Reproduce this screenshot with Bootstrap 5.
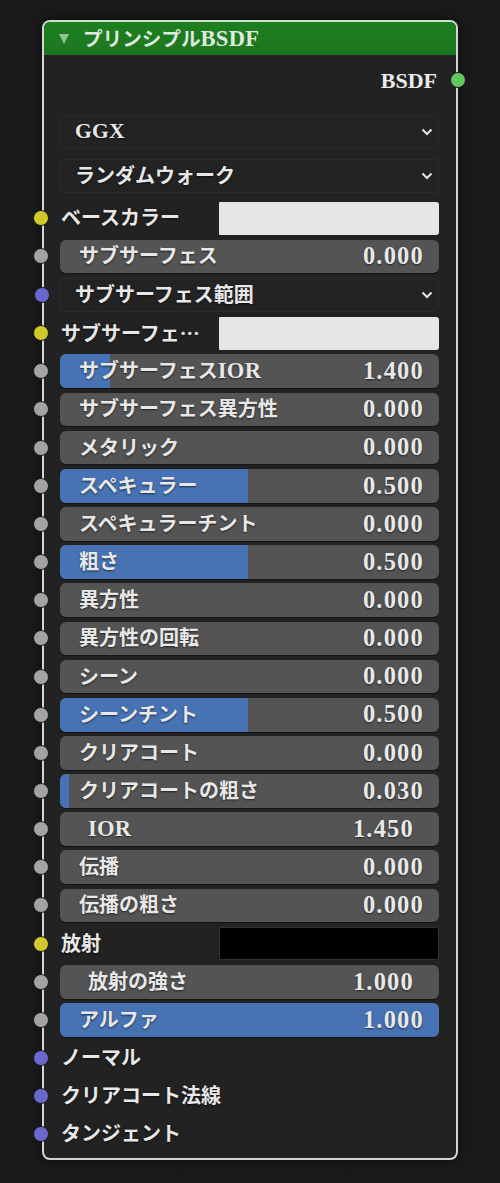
<!DOCTYPE html>
<html lang="ja">
<head>
<meta charset="utf-8">
<link href="https://cdn.jsdelivr.net/npm/bootstrap@5.3.0/dist/css/bootstrap.min.css" rel="stylesheet">
<style>
html,body{height:100%}
body{margin:0;background-color:#1a1a1a;background-image:linear-gradient(#161616 1px,transparent 1px),linear-gradient(90deg,#161616 1px,transparent 1px);background-size:169px 169px;background-position:9px 102px;font-family:"Liberation Serif","Noto Sans CJK JP",serif;font-weight:700;color:#e8e8e8;overflow:hidden}
.stage{padding:20px 42px 0;width:500px}
.bnode{position:relative;width:416px;height:1140px;background:#222;border:2px solid #d4d4d4;border-top-color:#cfe0cf;border-radius:8px;box-shadow:0 0 12px rgba(0,0,0,.55)}
.bhead{height:33px;background:linear-gradient(#1c7f1e 0,#1e7a20 60%,#1c741e 100%);border-radius:6px 6px 0 0;padding-left:15px;font-size:19.6px;line-height:33px;color:#dfe9df;gap:14px}
.tri{width:0;height:0;border-left:5.5px solid transparent;border-right:5.5px solid transparent;border-top:10px solid #8fc08f}
.ltn{font-size:22.5px;letter-spacing:.3px}
.ggx{font-size:21.5px;letter-spacing:.3px}
.bout{height:50px;padding-right:19px;font-size:22px;color:#ececec}
.rows{padding:10px 17px 0 16px;gap:4.5px}
.prow{position:relative;height:33.67px;font-size:20px;line-height:1;text-shadow:0 1px 2px rgba(0,0,0,.6);flex:none}
.drop{height:34px;border:1px solid #2c2c2c;background:#232323;border-radius:4px;padding:0 5px 0 14px}
.drop1{margin-bottom:5.7px}
.drop2{margin-bottom:3.8px}
.num{background:#545454;border-radius:6px;padding:0 15px 0 19px;box-shadow:0 1px 1px rgba(0,0,0,.4)}
.num.ind{padding:0 25px 0 28px}
.fillbar{position:absolute;left:0;top:0;bottom:0;background:#4772b3;border-radius:6px 0 0 6px}
.fillfull{border-radius:6px}
.num>span{position:relative}
.swatch{width:220px;height:33px;border-radius:1px 3px 3px 1px}
.sw-w{background:#e6e6e6}
.sw-k{background:#000;border:1px solid #333}
.lbl{padding-left:1px}
.ell{font-family:"Noto Sans CJK JP",sans-serif}
.sock{position:absolute;left:-27px;top:50%;width:16px;height:16px;margin-top:-8px;border-radius:50%;border:1px solid #1c1c1c}
.s-y{background:#d0c92a}
.s-g{background:#a3a3a3}
.s-b{background:#6868cf}
.s-o{background:#63c763;position:absolute;right:-10px;top:50%;width:16px;height:16px;margin-top:-8px;border-radius:50%;border:1px solid #1c1c1c}
.chev{width:12px;height:8px;flex:none}
.val{font-size:24.5px;letter-spacing:1.2px}
</style>
</head>
<body>
<div class="stage">
<div class="bnode">
  <div class="bhead d-flex align-items-center"><span class="tri"></span><span>プリンシプル<span class="ltn">BSDF</span></span></div>
  <div class="bout d-flex align-items-center justify-content-end position-relative">BSDF<i class="s-o"></i></div>
  <div class="rows d-flex flex-column">
    <div class="prow drop drop1 d-flex align-items-center justify-content-between"><span class="ggx">GGX</span><svg class="chev" viewBox="0 0 12 8"><path d="M1.5 1.5 6 6l4.5-4.5" fill="none" stroke="#e6e6e6" stroke-width="2"/></svg></div>
    <div class="prow drop drop2 d-flex align-items-center justify-content-between"><span>ランダムウォーク</span><svg class="chev" viewBox="0 0 12 8"><path d="M1.5 1.5 6 6l4.5-4.5" fill="none" stroke="#e6e6e6" stroke-width="2"/></svg></div>
    <div class="prow d-flex align-items-center justify-content-between"><i class="sock s-y"></i><span class="lbl">ベースカラー</span><div class="swatch sw-w"></div></div>
    <div class="prow num d-flex align-items-center justify-content-between"><i class="sock s-g"></i><span>サブサーフェス</span><span class="val">0.000</span></div>
    <div class="prow drop d-flex align-items-center justify-content-between"><i class="sock s-b"></i><span>サブサーフェス範囲</span><svg class="chev" viewBox="0 0 12 8"><path d="M1.5 1.5 6 6l4.5-4.5" fill="none" stroke="#e6e6e6" stroke-width="2"/></svg></div>
    <div class="prow d-flex align-items-center justify-content-between"><i class="sock s-y"></i><span class="lbl">サブサーフェ<span class="ell">…</span></span><div class="swatch sw-w"></div></div>
    <div class="prow num d-flex align-items-center justify-content-between"><div class="fillbar" style="width:13.2%"></div><i class="sock s-g"></i><span>サブサーフェス<span class="ltn">IOR</span></span><span class="val">1.400</span></div>
    <div class="prow num d-flex align-items-center justify-content-between"><i class="sock s-g"></i><span>サブサーフェス異方性</span><span class="val">0.000</span></div>
    <div class="prow num d-flex align-items-center justify-content-between"><i class="sock s-g"></i><span>メタリック</span><span class="val">0.000</span></div>
    <div class="prow num d-flex align-items-center justify-content-between"><div class="fillbar" style="width:49.6%"></div><i class="sock s-g"></i><span>スペキュラー</span><span class="val">0.500</span></div>
    <div class="prow num d-flex align-items-center justify-content-between"><i class="sock s-g"></i><span>スペキュラーチント</span><span class="val">0.000</span></div>
    <div class="prow num d-flex align-items-center justify-content-between"><div class="fillbar" style="width:49.6%"></div><i class="sock s-g"></i><span>粗さ</span><span class="val">0.500</span></div>
    <div class="prow num d-flex align-items-center justify-content-between"><i class="sock s-g"></i><span>異方性</span><span class="val">0.000</span></div>
    <div class="prow num d-flex align-items-center justify-content-between"><i class="sock s-g"></i><span>異方性の回転</span><span class="val">0.000</span></div>
    <div class="prow num d-flex align-items-center justify-content-between"><i class="sock s-g"></i><span>シーン</span><span class="val">0.000</span></div>
    <div class="prow num d-flex align-items-center justify-content-between"><div class="fillbar" style="width:49.6%"></div><i class="sock s-g"></i><span>シーンチント</span><span class="val">0.500</span></div>
    <div class="prow num d-flex align-items-center justify-content-between"><i class="sock s-g"></i><span>クリアコート</span><span class="val">0.000</span></div>
    <div class="prow num d-flex align-items-center justify-content-between"><div class="fillbar" style="width:2.4%"></div><i class="sock s-g"></i><span>クリアコートの粗さ</span><span class="val">0.030</span></div>
    <div class="prow num ind d-flex align-items-center justify-content-between"><i class="sock s-g"></i><span class="ltn">IOR</span><span class="val">1.450</span></div>
    <div class="prow num d-flex align-items-center justify-content-between"><i class="sock s-g"></i><span>伝播</span><span class="val">0.000</span></div>
    <div class="prow num d-flex align-items-center justify-content-between"><i class="sock s-g"></i><span>伝播の粗さ</span><span class="val">0.000</span></div>
    <div class="prow d-flex align-items-center justify-content-between"><i class="sock s-y"></i><span class="lbl">放射</span><div class="swatch sw-k"></div></div>
    <div class="prow num ind d-flex align-items-center justify-content-between"><i class="sock s-g"></i><span>放射の強さ</span><span class="val">1.000</span></div>
    <div class="prow num d-flex align-items-center justify-content-between"><div class="fillbar fillfull" style="width:100%"></div><i class="sock s-g"></i><span>アルファ</span><span class="val">1.000</span></div>
    <div class="prow d-flex align-items-center"><i class="sock s-b"></i><span class="lbl">ノーマル</span></div>
    <div class="prow d-flex align-items-center"><i class="sock s-b"></i><span class="lbl">クリアコート法線</span></div>
    <div class="prow d-flex align-items-center"><i class="sock s-b"></i><span class="lbl">タンジェント</span></div>
  </div>
</div>
</div>
<script src="https://cdn.jsdelivr.net/npm/bootstrap@5.3.0/dist/js/bootstrap.bundle.min.js"></script>
</body>
</html>
